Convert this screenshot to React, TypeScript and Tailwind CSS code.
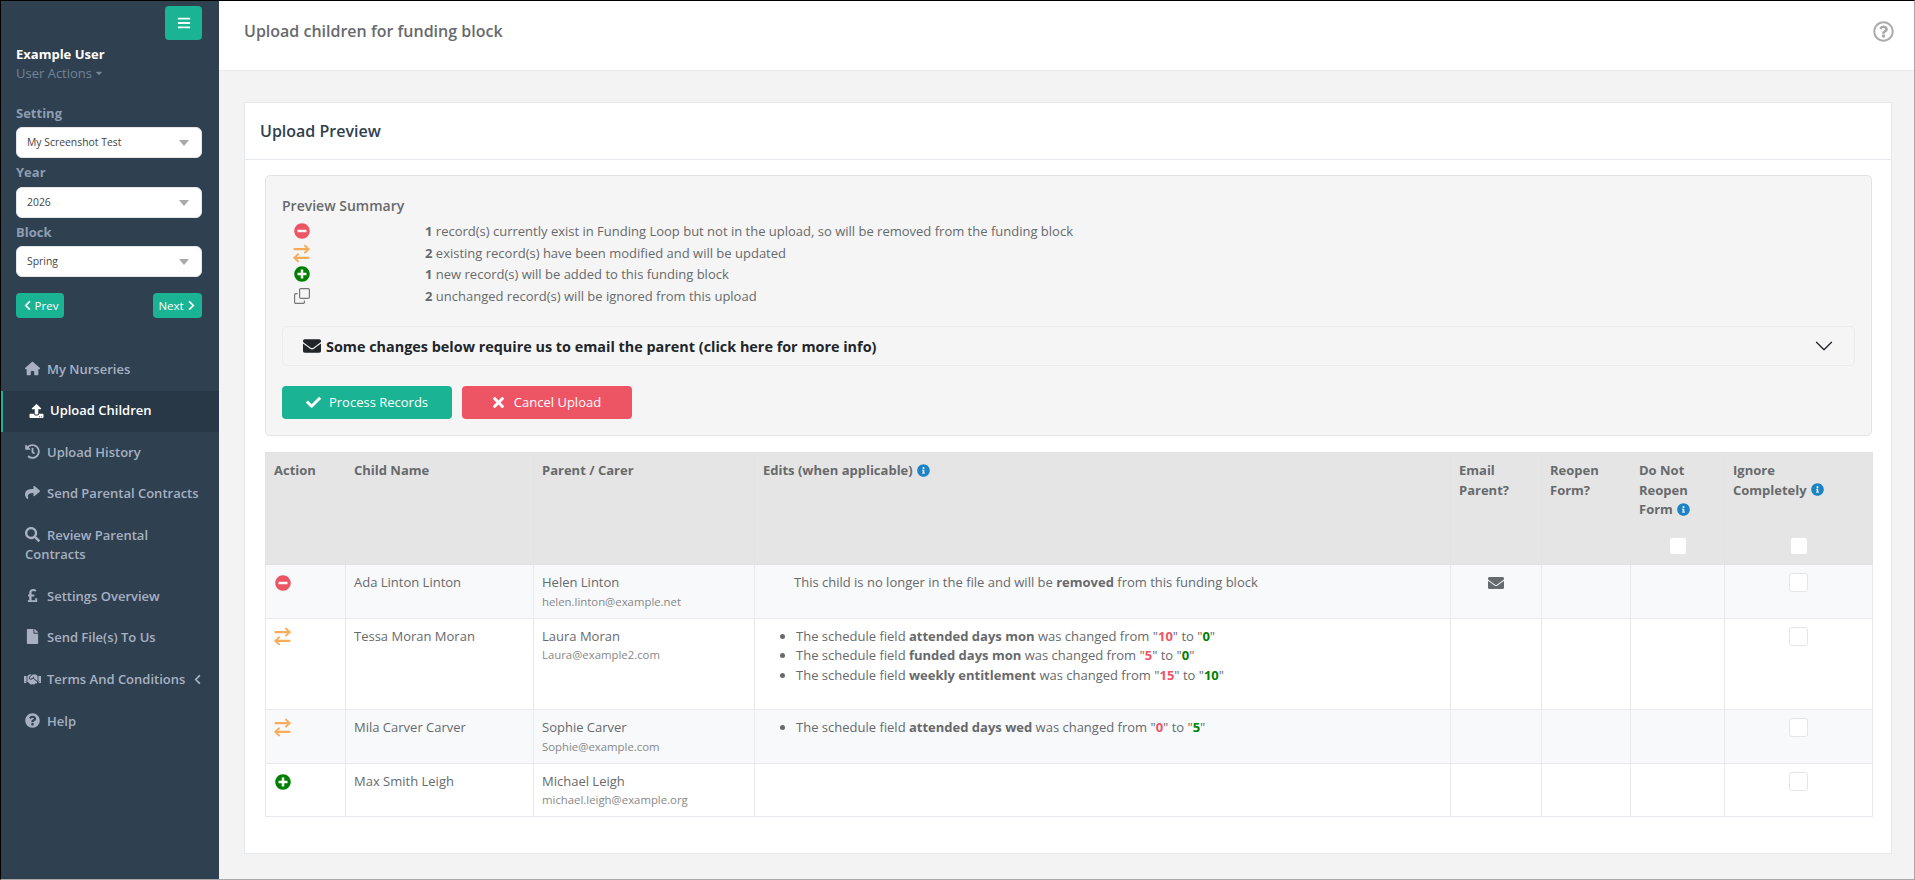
import React from "react";
import {
  FaBars, FaCaretDown, FaChevronLeft, FaChevronRight, FaUpload, FaHistory, FaShare, FaSearch,
  FaPoundSign, FaFile, FaHandshake, FaQuestionCircle, FaRegQuestionCircle, FaMinusCircle, FaPlusCircle,
  FaEnvelope, FaInfoCircle, FaCheck, FaTimes,
} from "react-icons/fa";
import { FaHouse } from "react-icons/fa6";
import { ArrowRightLeft } from "lucide-react";

function SideSelect({ value }: { value: string }) {
  return (
    <div className="flex h-[31px] w-[186px] items-center justify-between rounded-[6px] border border-[#e5e6e7] bg-white pl-[10px] pr-[12px] text-[10.4px] text-[#444]">
      <span className="pt-[1px]">{value}</span>
      <span className="h-0 w-0 border-x-[5.5px] border-t-[6px] border-x-transparent border-t-[#aaa]" />
    </div>
  );
}

function NavItem({ icon, children }: { icon: React.ReactNode; children: React.ReactNode }) {
  return (
    <div className="py-[11px] pl-[24px] pr-[10px] text-[13px] font-semibold leading-[19.5px] text-[#a7b1c2]">
      <span className="mr-[7px] inline-block w-[15px] align-[-2px] text-[15px] [&>svg]:mx-auto">{icon}</span>
      {children}
    </div>
  );
}

function SummaryRow({ icon, n, text }: { icon: React.ReactNode; n: string; text: string }) {
  return (
    <div className="flex h-[21.6px] items-center">
      <div className="w-[143px] pl-[12px]">{icon}</div>
      <div><b className="font-bold">{n}</b> {text}</div>
    </div>
  );
}

const Info = () => <FaInfoCircle className="ml-[1px] inline-block align-[-1.5px] text-[13px] text-[#1c84c6]" />;
const Box = ({ cls = "h-[19px] w-[19px]" }: { cls?: string }) => (
  <div className={`mx-auto rounded-[3px] border border-[#e5e6e7] bg-white ${cls}`} />
);
const Bad = ({ v }: { v: string }) => <b className="font-bold text-[#ed5565]">{v}</b>;
const Good = ({ v }: { v: string }) => <b className="font-bold text-[#008000]">{v}</b>;

function Change({ f, a, b }: { f: string; a: string; b: string }) {
  return (
    <li>
      The schedule field <b className="font-bold">{f}</b> was changed from "<Bad v={a} />" to "<Good v={b} />"
    </li>
  );
}

const td = "border border-[#e7eaec] p-[8px] align-top";
const th = "border border-[#e2e2e2] p-[8px] text-left align-top font-bold";
const Minus = ({ cls = "" }: { cls?: string }) => <FaMinusCircle className={`text-[16px] text-[#ed5565] ${cls}`} />;
const Plus = ({ cls = "" }: { cls?: string }) => <FaPlusCircle className={`text-[16px] text-[#008000] ${cls}`} />;
const Swap = () => <ArrowRightLeft className="-my-[3px] -ml-[3px] h-[21px] w-[21px] text-[#f8ac59]" strokeWidth={2.4} />;
const Clone = () => (
  <svg viewBox="0 0 16 16" className="-mt-[1px] h-[16px] w-[16px]" fill="none" stroke="#777" strokeWidth="1.2">
    <rect x="5.6" y="0.6" width="9.8" height="9.8" rx="1.2" />
    <path d="M3.6 5.6H1.8A1.2 1.2 0 0 0 .6 6.8v7.4a1.2 1.2 0 0 0 1.2 1.2h7.4a1.2 1.2 0 0 0 1.2-1.2v-1.8" />
  </svg>
);
const Chevron = () => (
  <svg viewBox="0 0 16 16" className="h-[20px] w-[20px]" fill="#212529">
    <path fillRule="evenodd" d="M1.646 4.646a.5.5 0 0 1 .708 0L8 10.293l5.646-5.647a.5.5 0 0 1 .708.708l-6 6a.5.5 0 0 1-.708 0l-6-6a.5.5 0 0 1 0-.708z" />
  </svg>
);

function Parent({ name, email }: { name: string; email: string }) {
  return (
    <>
      <div>{name}</div>
      <div className="mt-[1px] text-[11.375px] leading-[16px] text-[#888]">{email}</div>
    </>
  );
}

function Row({ striped, icon, child, name, email, edits, mail }: {
  striped?: boolean; icon: React.ReactNode; child: string; name: string; email: string; edits?: React.ReactNode; mail?: boolean;
}) {
  return (
    <tr className={striped ? "bg-[#f7f9fb]" : "bg-white"}>
      <td className={td}><div className="pl-[1px] pt-[2px]">{icon}</div></td>
      <td className={td}>{child}</td>
      <td className={td}><Parent name={name} email={email} /></td>
      <td className={td}>{edits}</td>
      <td className={td}>{mail && <FaEnvelope className="mx-auto mt-[2px] text-[16px] text-[#676a6c]" />}</td>
      <td className={td} />
      <td className={td} />
      <td className={td}><Box /></td>
    </tr>
  );
}

export default function App() {
  return (
    <div className="flex h-[880px] w-[1915px] overflow-hidden border-b border-l border-r border-t border-b-[#a8a8a8] border-l-black border-r-[#a8a8a8] border-t-black bg-[#f3f3f4] font-['Open_Sans',sans-serif] text-[13px] leading-[19.5px] text-[#676a6c]">
      <aside className="w-[218px] shrink-0 bg-[#2f4050]">
        <div className="pl-[15px] pr-[17px] pt-[5px]">
          <div className="flex justify-end">
            <button className="flex h-[34px] w-[37px] items-center justify-center rounded-[4px] bg-[#1ab394] text-[14px] text-white"><FaBars /></button>
          </div>
          <div className="mt-[5px] text-[13px] font-bold leading-[19.5px] text-white">Example User</div>
          <div className="-mt-[1px] flex items-center text-[13px] leading-[19.5px] text-[#70849a]">User Actions<FaCaretDown className="ml-[2px] text-[10px]" /></div>
          <div className="mt-[21px] font-bold leading-[19.5px] text-[#8d9db2]">Setting</div>
          <div className="mt-[3.5px]"><SideSelect value="My Screenshot Test" /></div>
          <div className="mt-[5px] font-bold leading-[19.5px] text-[#8d9db2]">Year</div>
          <div className="mt-[4.5px]"><SideSelect value="2026" /></div>
          <div className="mt-[5px] font-bold leading-[19.5px] text-[#8d9db2]">Block</div>
          <div className="mt-[3.5px]"><SideSelect value="Spring" /></div>
          <div className="mt-[16px] flex w-[186px] justify-between">
            <button className="flex h-[25px] w-[48px] items-center justify-center gap-[2px] rounded-[4px] bg-[#1ab394] text-[11.5px] text-white"><FaChevronLeft className="text-[11px]" />Prev</button>
            <button className="flex h-[25px] w-[49px] items-center justify-center gap-[2px] rounded-[4px] bg-[#1ab394] text-[11.5px] text-white">Next<FaChevronRight className="text-[11px]" /></button>
          </div>
        </div>
        <nav className="mt-[31px]">
          <NavItem icon={<FaHouse />}>My Nurseries</NavItem>
          <div className="flex h-[41px] items-center border-l-2 border-[#1ab394] bg-[#293846] pl-[26px] text-[13px] font-semibold text-white">
            <FaUpload className="mr-[6px] w-[15px] text-[14px]" />Upload Children
          </div>
          <NavItem icon={<FaHistory />}>Upload History</NavItem>
          <NavItem icon={<FaShare />}>Send Parental Contracts</NavItem>
          <NavItem icon={<FaSearch />}>Review Parental Contracts</NavItem>
          <NavItem icon={<FaPoundSign />}>Settings Overview</NavItem>
          <NavItem icon={<FaFile />}>Send File(s) To Us</NavItem>
          <div className="flex items-center py-[11px] pl-[23px] text-[13px] font-semibold leading-[19.5px] text-[#a7b1c2]">
            <FaHandshake className="mr-[6px] w-[17px] text-[17px]" />Terms And Conditions<FaChevronLeft className="ml-[7px] text-[11px]" />
          </div>
          <div className="pt-[1px]"><NavItem icon={<FaQuestionCircle />}>Help</NavItem></div>
        </nav>
      </aside>

      <main className="min-w-0 flex-1">
        <header className="flex h-[70px] items-start justify-between border-b border-[#e7eaec] bg-white pl-[25px] pr-[20px]">
          <h2 className="mt-[20px] text-[16px] font-semibold leading-[20px]">Upload children for funding block</h2>
          <FaRegQuestionCircle className="mt-[20px] text-[21px] text-[#aaa]" />
        </header>
        <section className="ml-[25px] mt-[31px] h-[752px] w-[1648px] border border-[#e7eaec] bg-white">
          <div className="flex h-[57px] items-center border-b border-[#e7eaec] pl-[15px] pt-[1px] text-[16px] font-semibold text-[#2f4050]">Upload Preview</div>
          <div className="pl-[20px] pr-[19px] pt-[15px]">
            <div className="h-[261px] rounded-[5px] border border-[#e3e3e3] bg-[#f5f5f5] px-[16px] pt-[20px]">
              <div className="text-[14px] font-semibold leading-[20px]">Preview Summary</div>
              <div className="mt-[5px]">
                <SummaryRow icon={<Minus cls="-mt-[1px]" />} n="1" text="record(s) currently exist in Funding Loop but not in the upload, so will be removed from the funding block" />
                <SummaryRow icon={<Swap />} n="2" text="existing record(s) have been modified and will be updated" />
                <SummaryRow icon={<Plus cls="-mt-[1px]" />} n="1" text="new record(s) will be added to this funding block" />
                <SummaryRow icon={<Clone />} n="2" text="unchanged record(s) will be ignored from this upload" />
              </div>
              <div className="mt-[19px] flex h-[40px] items-center justify-between rounded-[5px] border border-[#ebebeb] bg-[#f5f5f5] pl-[20px] pr-[20px] text-[14.4px] font-bold text-[#212529]">
                <div className="flex items-center"><FaEnvelope className="mr-[5px] text-[18px]" />Some changes below require us to email the parent (click here for more info)</div>
                <Chevron />
              </div>
              <div className="mt-[20px] flex gap-[10px] text-white">
                <button className="flex h-[33px] w-[170px] items-center justify-center gap-[8px] rounded-[4px] bg-[#1ab394]"><FaCheck className="text-[15px]" />Process Records</button>
                <button className="flex h-[33px] w-[170px] items-center justify-center gap-[10px] rounded-[4px] bg-[#ed5565]"><FaTimes className="h-[17px] w-[11px]" />Cancel Upload</button>
              </div>
            </div>
            <table className="mt-[16px] w-[1607px] table-fixed border-collapse">
              <colgroup>
                <col className="w-[80px]" /><col className="w-[188px]" /><col className="w-[221px]" /><col className="w-[696px]" />
                <col className="w-[91px]" /><col className="w-[89px]" /><col className="w-[94px]" /><col className="w-[148px]" />
              </colgroup>
              <thead>
                <tr className="h-[112px] bg-[#e5e5e5]">
                  <th className={th}>Action</th>
                  <th className={th}>Child Name</th>
                  <th className={th}>Parent / Carer</th>
                  <th className={th}>Edits (when applicable) <Info /></th>
                  <th className={th}>Email Parent?</th>
                  <th className={th}>Reopen Form?</th>
                  <th className={th}>Do Not Reopen Form <Info /><Box cls="mt-[17px] h-[18px] w-[18px] border-[#e5e5e5]" /></th>
                  <th className={th}>Ignore<br />Completely <Info /><div className="h-[19.5px]" /><Box cls="mt-[17px] h-[18px] w-[18px] border-[#e5e5e5]" /></th>
                </tr>
              </thead>
              <tbody>
                <Row striped icon={<Minus />} child="Ada Linton Linton" name="Helen Linton" email="helen.linton@example.net" mail
                  edits={<div className="pl-[31px]">This child is no longer in the file and will be <b className="font-bold">removed</b> from this funding block</div>} />
                <Row icon={<Swap />} child="Tessa Moran Moran" name="Laura Moran" email="Laura@example2.com"
                  edits={<ul className="mb-[16px] list-disc pl-[33px] marker:text-[#676a6c]">
                    <Change f="attended days mon" a="10" b="0" />
                    <Change f="funded days mon" a="5" b="0" />
                    <Change f="weekly entitlement" a="15" b="10" />
                  </ul>} />
                <Row striped icon={<Swap />} child="Mila Carver Carver" name="Sophie Carver" email="Sophie@example.com"
                  edits={<ul className="list-disc pl-[33px]"><Change f="attended days wed" a="0" b="5" /></ul>} />
                <Row icon={<Plus />} child="Max Smith Leigh" name="Michael Leigh" email="michael.leigh@example.org" />
              </tbody>
            </table>
          </div>
        </section>
      </main>
    </div>
  );
}
